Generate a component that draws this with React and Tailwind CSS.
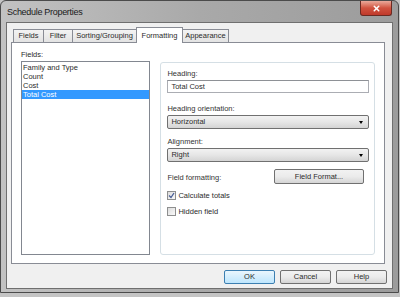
import { X } from 'lucide-react';

const font = { fontFamily: '"Liberation Sans", Arial, sans-serif' };

function Tab({ label, active, w }) {
  if (active) {
    return (
      <div
        className={`relative z-10 -mb-px flex h-[16px] items-center justify-center border border-b-0 border-[#898c95] bg-white text-[7.5px] text-[#2b2b2b] ${w}`}
      >
        {label}
      </div>
    );
  }
  return (
    <div
      className={`mt-[2px] flex h-[13px] items-center justify-center border border-b-0 border-[#898c95] bg-gradient-to-b from-[#f3f3f3] to-[#e3e3e3] text-[7.5px] text-[#2b2b2b] ${w} -ml-px first:ml-0`}
    >
      {label}
    </div>
  );
}

function Combo({ value }) {
  return (
    <div className="flex h-[14px] w-[202px] items-center justify-between rounded-[2px] border border-[#707070] bg-gradient-to-b from-[#f2f2f2] via-[#e6e6e6] to-[#d4d4d4] pl-[3px] pr-[5px] text-[7.5px] text-[#2b2b2b]">
      <span>{value}</span>
      <span className="h-0 w-0 border-x-[2.5px] border-t-[3px] border-x-transparent border-t-black" />
    </div>
  );
}

function Check({ checked, label }) {
  return (
    <div className="flex h-[11px] items-center gap-[2px] text-[7.5px] text-[#2b2b2b]">
      <span className="flex h-[9px] w-[9px] items-center justify-center border border-[#8e8f8f] bg-gradient-to-br from-[#dcdcdc] to-[#fafafa]">
        {checked && (
          <svg width="7" height="7" viewBox="0 0 7 7">
            <path d="M1 3.5 L3 5.5 L6 1" fill="none" stroke="#4a5f97" strokeWidth="1.3" />
          </svg>
        )}
      </span>
      <span>{label}</span>
    </div>
  );
}

function Btn({ label, focused }) {
  return (
    <div
      className={`flex h-[14px] w-[51px] items-center justify-center rounded-[2px] border text-[7.5px] text-[#2b2b2b] ${
        focused
          ? 'border-[#3c7fb1] bg-gradient-to-b from-[#eaf6fd] to-[#bee6fd]'
          : 'border-[#707070] bg-gradient-to-b from-[#f2f2f2] via-[#ebebeb] to-[#d5d5d5]'
      }`}
    >
      {label}
    </div>
  );
}

export default function App() {
  return (
    <div className="h-[297px] w-[400px] overflow-hidden bg-[#c4c4c4]" style={font}>
      <div className="flex h-[293px] w-[399px] flex-col rounded-t-[6px] border border-[#4b4b4b] bg-gradient-to-r from-[#c2c2c2] via-[#a9a9a9] to-[#9c9c9c] px-[5px] pb-[3px]">
        {/* title bar */}
        <div className="flex h-[21px] items-start justify-between">
          <span className="mt-[5px] ml-[1px] text-[9px] tracking-[-0.3px] text-[#1a1a1a]">Schedule Properties</span>
          <div className="mr-[1px] flex h-[15px] w-[32px] items-center justify-center rounded-b-[3px] border border-t-0 border-[#6b2a22] bg-gradient-to-b from-[#e9a99b] via-[#d0523f] to-[#c0392b]">
            <X size={9} strokeWidth={4} className="text-white" />
          </div>
        </div>

        {/* client */}
        <div className="flex flex-1 flex-col border border-[#6f6f6f] bg-[#f0f0f0]">
          <div className="ml-[5px] mt-[4px] flex h-[15px] items-end pl-px">
            <Tab label="Fields" w="w-[31px]" />
            <Tab label="Filter" w="w-[30px]" />
            <Tab label="Sorting/Grouping" w="w-[65px]" />
            <Tab label="Formatting" active w="w-[47px] -ml-px" />
            <Tab label="Appearance" w="w-[47px]" />
          </div>

          <div className="mx-[7px] ml-[4px] flex h-[222px] border border-[#898c95] bg-white px-[9px] pt-[6px]">
            <div className="w-[131px]">
              <div className="h-[12px] text-[7.5px] leading-[12px] text-[#2b2b2b]">Fields:</div>
              <div className="h-[194px] border border-[#828790] pt-[1px] text-[7.5px] leading-[9px] text-[#2b2b2b]">
                <div className="px-[1px]">Family and Type</div>
                <div className="px-[1px]">Count</div>
                <div className="px-[1px]">Cost</div>
                <div className="bg-[#3399ff] px-[1px] text-white">Total Cost</div>
              </div>
            </div>

            <div className="ml-[10px] mt-[13px] flex h-[193px] w-[217px] flex-col rounded-[3px] border border-[#d5dfe5] bg-white pl-[6px] pt-[6px] text-[7.5px] text-[#2b2b2b]">
              <div className="h-[10px] leading-[10px] text-[#333]">Heading:</div>
              <div className="mt-[1px] flex h-[13px] w-[202px] items-center border border-[#abadb3] border-t-[#8e9196] pl-[3px]">
                Total Cost
              </div>
              <div className="mt-[11px] h-[10px] leading-[10px] text-[#333]">Heading orientation:</div>
              <div className="mt-[1px]">
                <Combo value="Horizontal" />
              </div>
              <div className="mt-[8px] h-[10px] leading-[10px] text-[#333]">Alignment:</div>
              <div className="mt-[1px]">
                <Combo value="Right" />
              </div>
              <div className="mt-[7px] flex h-[15px] items-center justify-between pr-[10px]">
                <span className="mt-[3px] text-[#333]">Field formatting:</span>
                <div className="flex h-[15px] w-[90px] items-center justify-center rounded-[2px] border border-[#707070] bg-gradient-to-b from-[#f2f2f2] via-[#ebebeb] to-[#d5d5d5]">
                  Field Format...
                </div>
              </div>
              <div className="mt-[6px]">
                <Check checked label="Calculate totals" />
              </div>
              <div className="mt-[5px]">
                <Check label="Hidden field" />
              </div>
            </div>
          </div>

          <div className="mr-[5px] mt-[6px] flex justify-end gap-[5px]">
            <Btn label="OK" focused />
            <Btn label="Cancel" />
            <Btn label="Help" />
          </div>
        </div>
      </div>
    </div>
  );
}
